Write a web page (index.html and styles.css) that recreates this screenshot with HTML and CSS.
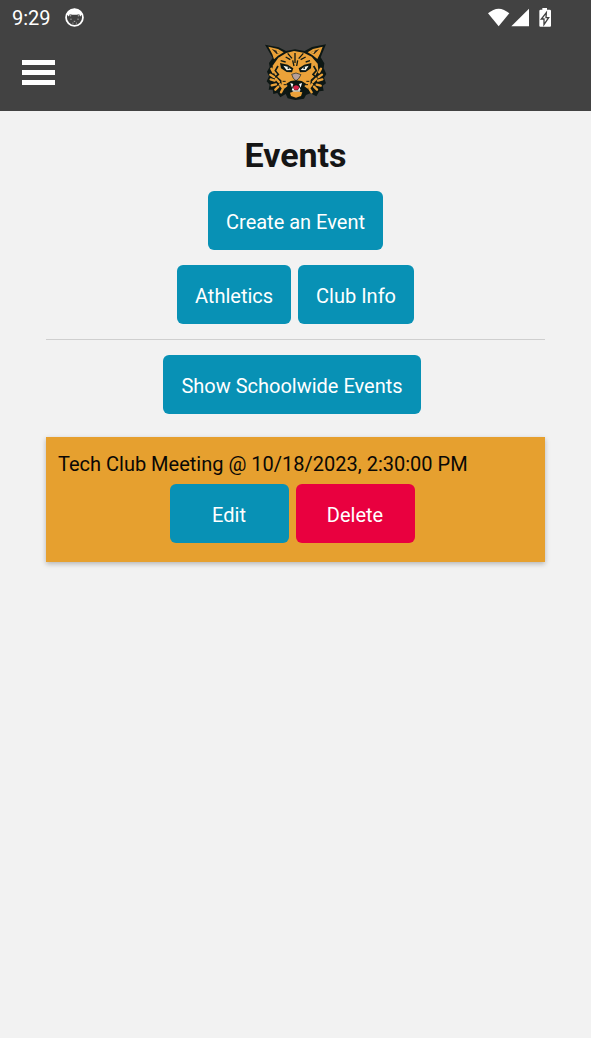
FILE: index.html
```
<!DOCTYPE html>
<html lang="en">
<head>
<meta charset="utf-8">
<meta name="viewport" content="width=device-width, initial-scale=1">
<title>Events</title>
<link rel="stylesheet" href="styles.css">
</head>
<body>
<header class="top">
  <div class="status">
    <span class="clock">9:29</span>
    <svg class="cat" viewBox="0 0 54 54" aria-hidden="true">
      <circle cx="27" cy="27" r="24" fill="none" stroke="#fff" stroke-width="5"/>
      <path d="M5 18Q10 3 27 2Q44 3 49 18L43 24L40 17L34 19H20L14 17L11 24Z" fill="#fff"/>
      <path d="M16 18v6M38 18v6M17 30v4M37 30v4M25 38h4M21 43h3M31 43h3" stroke="#d8d8d8" stroke-width="2"/>
    </svg>
    <svg class="signals" viewBox="0 0 192 60" aria-hidden="true">
      <path d="M0 16Q32-12 64 16L32 55Z" fill="#fff"/>
      <path d="M123 2V55H70Z" fill="#fff"/>
      <path d="M163 0h14v5h8q4 0 4 4v44q0 3-3 3h-29q-3 0-3-3V9q0-4 4-4h5Z" fill="#fff"/>
      <path d="M175 14L160 33h8v17l14-21h-8Z" fill="#fff" stroke="#424242" stroke-width="4"/>
    </svg>
  </div>
  <div class="nav">
    <button class="menu" type="button" aria-label="Menu"><span></span><span></span><span></span></button>
    <svg class="logo" viewBox="14 18 186 168" role="img" aria-label="Wildcat">
      <path d="M14 20L55 28L77 39L104 34L133 39L155 27L197 19L181 58L192 76L190 91L198 108L191 119L197 136L187 143L190 158L177 160L168 175L150 166L137 171L131 182L105 186L82 181L76 168L60 178L51 165L39 168L37 155L25 155L28 140L19 130L26 115L20 101L28 87L26 75L37 60Z" fill="#0d1714"/>
      <path d="M24 26L53 33L70 43L53 53L41 64L36 49ZM187 26L158 33L142 43L157 52L171 63L179 47Z" fill="#e9a037"/>
      <path d="M34 33L61 43L49 48ZM177 33L151 43L162 48Z" fill="#27231a"/>
      <path d="M48 38L64 43L52 46ZM164 38L149 43L160 46Z" fill="#f3b44c"/>
      <path d="M38 82L54 59L78 45L101 39L130 44L154 56L172 77L174 96L165 113L150 126L127 135H84L62 126L44 111L36 94Z" fill="#eba239"/>
      <path d="M82 46L95 61M104 45V75M129 46L115 62M76 57L90 65M136 57L121 65M97 67L101 84M112 67L109 84M61 68L76 72M149 68L136 72" fill="none" stroke="#101a15" stroke-width="4"/>
      <path d="M59 75L82 80L99 91L95 103L79 102L62 91ZM153 75L132 80L115 91L119 103L136 102L152 91Z" fill="#0b1612"/>
      <path d="M69 83L85 87L94 96L79 97ZM145 83L130 87L121 96L136 97Z" fill="#f5f5ec"/>
      <path d="M82 87h5v6h-5ZM129 87h5v6h-5Z" fill="#27383a"/>
      <path d="M94 109L107 105L122 110L115 122L107 128L99 121Z" fill="#b7a09b" stroke="#17211c" stroke-width="2"/>
      <path d="M53 84L45 98L54 109L45 118L56 128M160 84L168 98L158 109L168 118L157 128" fill="none" stroke="#111b16" stroke-width="5"/>
      <path d="M33 92L39 103M30 110L41 117M31 124L43 128M34 142L47 139M45 155L54 146M47 122L56 132M62 163L68 152M59 139L67 149M182 92L176 103M185 110L175 117M186 124L173 128M181 143L169 140M170 155L161 146M168 122L158 132M154 163L147 152M155 139L147 149" fill="none" stroke="#eba239" stroke-width="7" stroke-linecap="round"/>
      <path d="M63 121L78 126L88 132L81 145L72 152L64 143ZM151 121L136 126L126 132L132 145L142 152L150 143Z" fill="#eba239"/>
      <path d="M67 130h9M70 140h9M147 130h-9M143 140h-9" stroke="#111b16" stroke-width="3"/>
      <path d="M78 137L91 129L107 127L124 129L137 137L128 151L130 172L119 179L95 178L84 171L87 152Z" fill="#0c1712"/>
      <path d="M90 135L99 138L95 149ZM125 135L116 138L121 149ZM94 157L98 148L103 158ZM121 157L117 148L112 158Z" fill="#fff"/>
      <path d="M98 147Q107 137 117 147L112 155H102Z" fill="#d62048"/>
      <path d="M89 164L103 160L126 163L122 174L107 179L92 174Z" fill="#eba239"/>
      <path d="M97 159H119" stroke="#eee9d9" stroke-width="4"/>
    </svg>
  </div>
</header>
<main class="page">
  <h1>Events</h1>
  <div class="row"><button class="btn" type="button">Create an Event</button></div>
  <div class="row"><button class="btn" type="button">Athletics</button><button class="btn" type="button">Club Info</button></div>
  <hr>
  <div class="row actions"><button class="btn" type="button">Show Schoolwide Events</button></div>
  <article class="card">
    <p>Tech Club Meeting @ 10/18/2023, 2:30:00 PM</p>
    <div class="row actions"><button class="btn wide" type="button">Edit</button><button class="btn wide danger" type="button">Delete</button></div>
  </article>
</main>
</body>
</html>
```
FILE: styles.css
```
* { box-sizing: border-box; }
body { margin: 0; min-height: 100vh; background: #f2f2f2; color: #151515; font-family: Roboto, sans-serif; font-size: 20px; line-height: 24px; }
.top { background: #424242; color: #fff; }
.status { display: flex; align-items: center; height: 35px; padding: 0 39px 0 12px; }
.clock { margin-right: 14px; }
.cat { width: 19px; height: 19px; overflow: visible; }
.signals { width: 64px; height: 20px; margin-left: auto; overflow: visible; }
.nav { display: grid; grid-template-columns: 1fr auto 1fr; align-items: center; height: 76px; padding: 0 22px 2px; }
.menu { display: grid; gap: 5px; width: 33px; padding: 0; border: 0; background: none; }
.menu span { height: 5px; background: #fff; }
.logo { width: 62px; height: 56px; }
.page { padding: 23px 46px; }
h1 { margin: 0 0 15px; font-size: 34px; line-height: 42px; font-weight: 700; text-align: center; }
.row { display: flex; justify-content: center; gap: 7px; margin-bottom: 15px; }
.actions { padding-right: 7px; }
.btn { min-height: 59px; padding: 2px 18px 0; border: 0; border-radius: 6px; background: #0891b5; color: #fff; font: inherit; }
.wide { width: 119px; }
.danger { background: #e9003f; }
hr { height: 1px; margin: 0 0 15px; border: 0; background: #cfcfcf; }
.card { margin-top: 23px; padding: 15px 12px 19px; background: #e6a02f; box-shadow: 0 2px 5px rgba(0, 0, 0, 0.25); }
.card p { margin: 0 0 8px; color: #0a0805; }
.card .row { margin-bottom: 0; }
```
